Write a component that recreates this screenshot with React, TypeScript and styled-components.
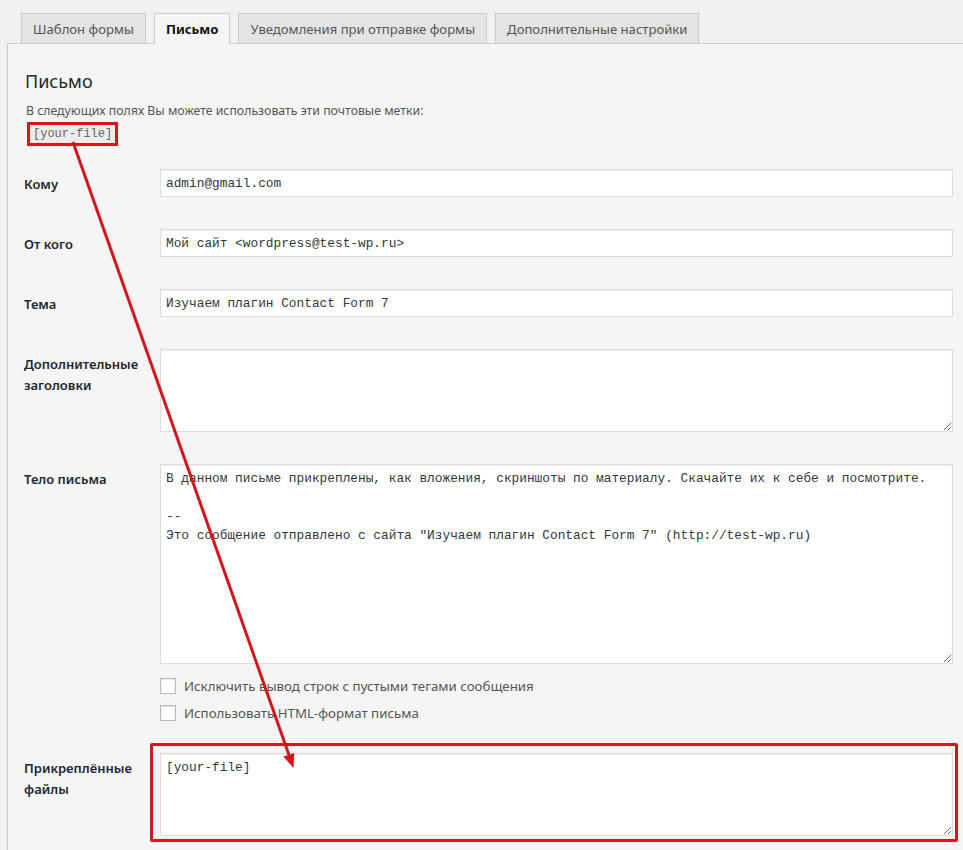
import * as React from 'react';
import styled, { createGlobalStyle } from 'styled-components';

const GlobalStyle = createGlobalStyle`
  html, body {
    margin: 0;
    background: #f1f1f1;
    font-family: "Noto Sans", "Open Sans", Arial, sans-serif;
    color: #444;
  }
`;

const Page = styled.div`
  position: relative;
  width: 963px;
  height: 850px;
  overflow: hidden;
  padding: 13px 0 0 7px;
  box-sizing: border-box;
`;

const TabBar = styled.div`
  display: flex;
  align-items: flex-end;
  gap: 8px;
  padding-left: 14px;
  border-bottom: 1px solid #ccc;
  height: 30px;
`;

const Tab = styled.div<{ active?: boolean }>`
  box-sizing: border-box;
  padding: 0 11px;
  display: flex;
  align-items: center;
  border: 1px solid #ccc;
  border-bottom: none;
  background: ${(p) => (p.active ? '#f5f5f5' : '#e4e4e4')};
  font-size: 13.1px;
  font-weight: ${(p) => (p.active ? 700 : 400)};
  color: ${(p) => (p.active ? '#111' : '#555')};
  margin-bottom: ${(p) => (p.active ? '-1px' : '0')};
  height: ${(p) => (p.active ? '31px' : '30px')};
  white-space: nowrap;
`;

const Panel = styled.div`
  background: #f5f5f5;
  border-left: 1px solid #ccc;
  padding: 24px 10px 0 16px;
  height: 820px;
  box-sizing: border-box;
`;

const Heading = styled.h2`
  margin: 0 0 8px 1px;
  font-size: 18px;
  font-weight: 400;
  line-height: 26px;
  color: #23282d;
`;

const Hint = styled.p`
  margin: 0 0 0 2px;
  font-size: 12.3px;
  line-height: 18px;
  color: #555;
`;

const TagCode = styled.code`
  display: inline-block;
  margin: 1px 0 0 6px;
  padding: 1px 3px;
  background: #ececec;
  font-family: "Liberation Mono", "DejaVu Sans Mono", monospace;
  font-size: 12px;
  line-height: 16px;
  color: #666;
  outline: 3px solid #d4161c;
  outline-offset: 0;
`;

const FormGrid = styled.div`
  display: grid;
  grid-template-columns: 136px 1fr;
  row-gap: 32px;
  margin-top: 26px;
`;

const Label = styled.div`
  padding-top: 5px;
  font-size: 13px;
  line-height: 21px;
  font-weight: 600;
  color: #23282d;
`;

const Field = styled.div`
  display: flex;
  flex-direction: column;
  min-width: 0;
`;

const fieldBase = `
  box-sizing: border-box;
  width: 100%;
  border: 1px solid #ddd;
  box-shadow: inset 0 1px 2px rgba(0, 0, 0, 0.07);
  background: #fff;
  font-family: "Liberation Mono", "DejaVu Sans Mono", monospace;
  font-size: 12.8px;
  color: #32373c;
  margin: 0;
  outline: none;
`;

const TextInput = styled.input`
  ${fieldBase}
  height: 28px;
  padding: 0 5px;
  line-height: 26px;
`;

const TextArea = styled.textarea<{ $h: number }>`
  ${fieldBase}
  height: ${(p) => p.$h}px;
  padding: 4px 5px;
  line-height: 19px;
  resize: both;
  display: block;
  white-space: pre-wrap;
`;

const CheckList = styled.div`
  display: flex;
  flex-direction: column;
  margin: 8px 0 -5px;
`;

const CheckRow = styled.label`
  display: flex;
  align-items: center;
  gap: 8px;
  height: 27px;
  font-size: 13.3px;
  color: #555;
`;

const Check = styled.input`
  appearance: none;
  margin: 0;
  width: 16px;
  height: 16px;
  border: 1px solid #b4b9be;
  background: #fff;
  box-shadow: inset 0 1px 2px rgba(0, 0, 0, 0.1);
`;

const Highlight = styled.div`
  position: relative;
  &::after {
    content: '';
    position: absolute;
    top: -10px;
    left: -10px;
    right: -5px;
    bottom: -6px;
    border: 3px solid #d4161c;
    border-radius: 2px;
    pointer-events: none;
  }
`;

const Overlay = styled.svg`
  position: absolute;
  left: 0;
  top: 0;
  pointer-events: none;
`;

const bodyText =
  'В данном письме прикреплены, как вложения, скриншоты по материалу. Скачайте их к себе и посмотрите.\n\n--\nЭто сообщение отправлено с сайта "Изучаем плагин Contact Form 7" (http://test-wp.ru)';

export default function App(): JSX.Element {
  return (
    <>
      <GlobalStyle />
      <Page>
        <TabBar>
          <Tab>Шаблон формы</Tab>
          <Tab active>Письмо</Tab>
          <Tab>Уведомления при отправке формы</Tab>
          <Tab>Дополнительные настройки</Tab>
        </TabBar>
        <Panel>
          <Heading>Письмо</Heading>
          <Hint>В следующих полях Вы можете использовать эти почтовые метки:</Hint>
          <TagCode>[your-file]</TagCode>

          <FormGrid>
            <Label>Кому</Label>
            <Field>
              <TextInput readOnly defaultValue="admin@gmail.com" />
            </Field>

            <Label>От кого</Label>
            <Field>
              <TextInput readOnly defaultValue="Мой сайт <wordpress@test-wp.ru>" />
            </Field>

            <Label>Тема</Label>
            <Field>
              <TextInput readOnly defaultValue="Изучаем плагин Contact Form 7" />
            </Field>

            <Label>
              Дополнительные
              <br />
              заголовки
            </Label>
            <Field>
              <TextArea readOnly $h={83} defaultValue="" />
            </Field>

            <Label>Тело письма</Label>
            <Field>
              <TextArea readOnly $h={200} defaultValue={bodyText} />
              <CheckList>
                <CheckRow>
                  <Check type="checkbox" />
                  Исключить вывод строк с пустыми тегами сообщения
                </CheckRow>
                <CheckRow>
                  <Check type="checkbox" />
                  Использовать HTML-формат письма
                </CheckRow>
              </CheckList>
            </Field>

            <Label>
              Прикреплённые
              <br />
              файлы
            </Label>
            <Field>
              <Highlight>
                <TextArea readOnly $h={83} defaultValue="[your-file]" />
              </Highlight>
            </Field>
          </FormGrid>
        </Panel>

        <Overlay width="963" height="850" viewBox="0 0 963 850">
          <line x1="73" y1="142" x2="289" y2="755" stroke="#d4161c" strokeWidth="3" />
          <polygon points="293.5,768 294.3,753 283.4,756.6" fill="#d4161c" />
        </Overlay>
      </Page>
    </>
  );
}
